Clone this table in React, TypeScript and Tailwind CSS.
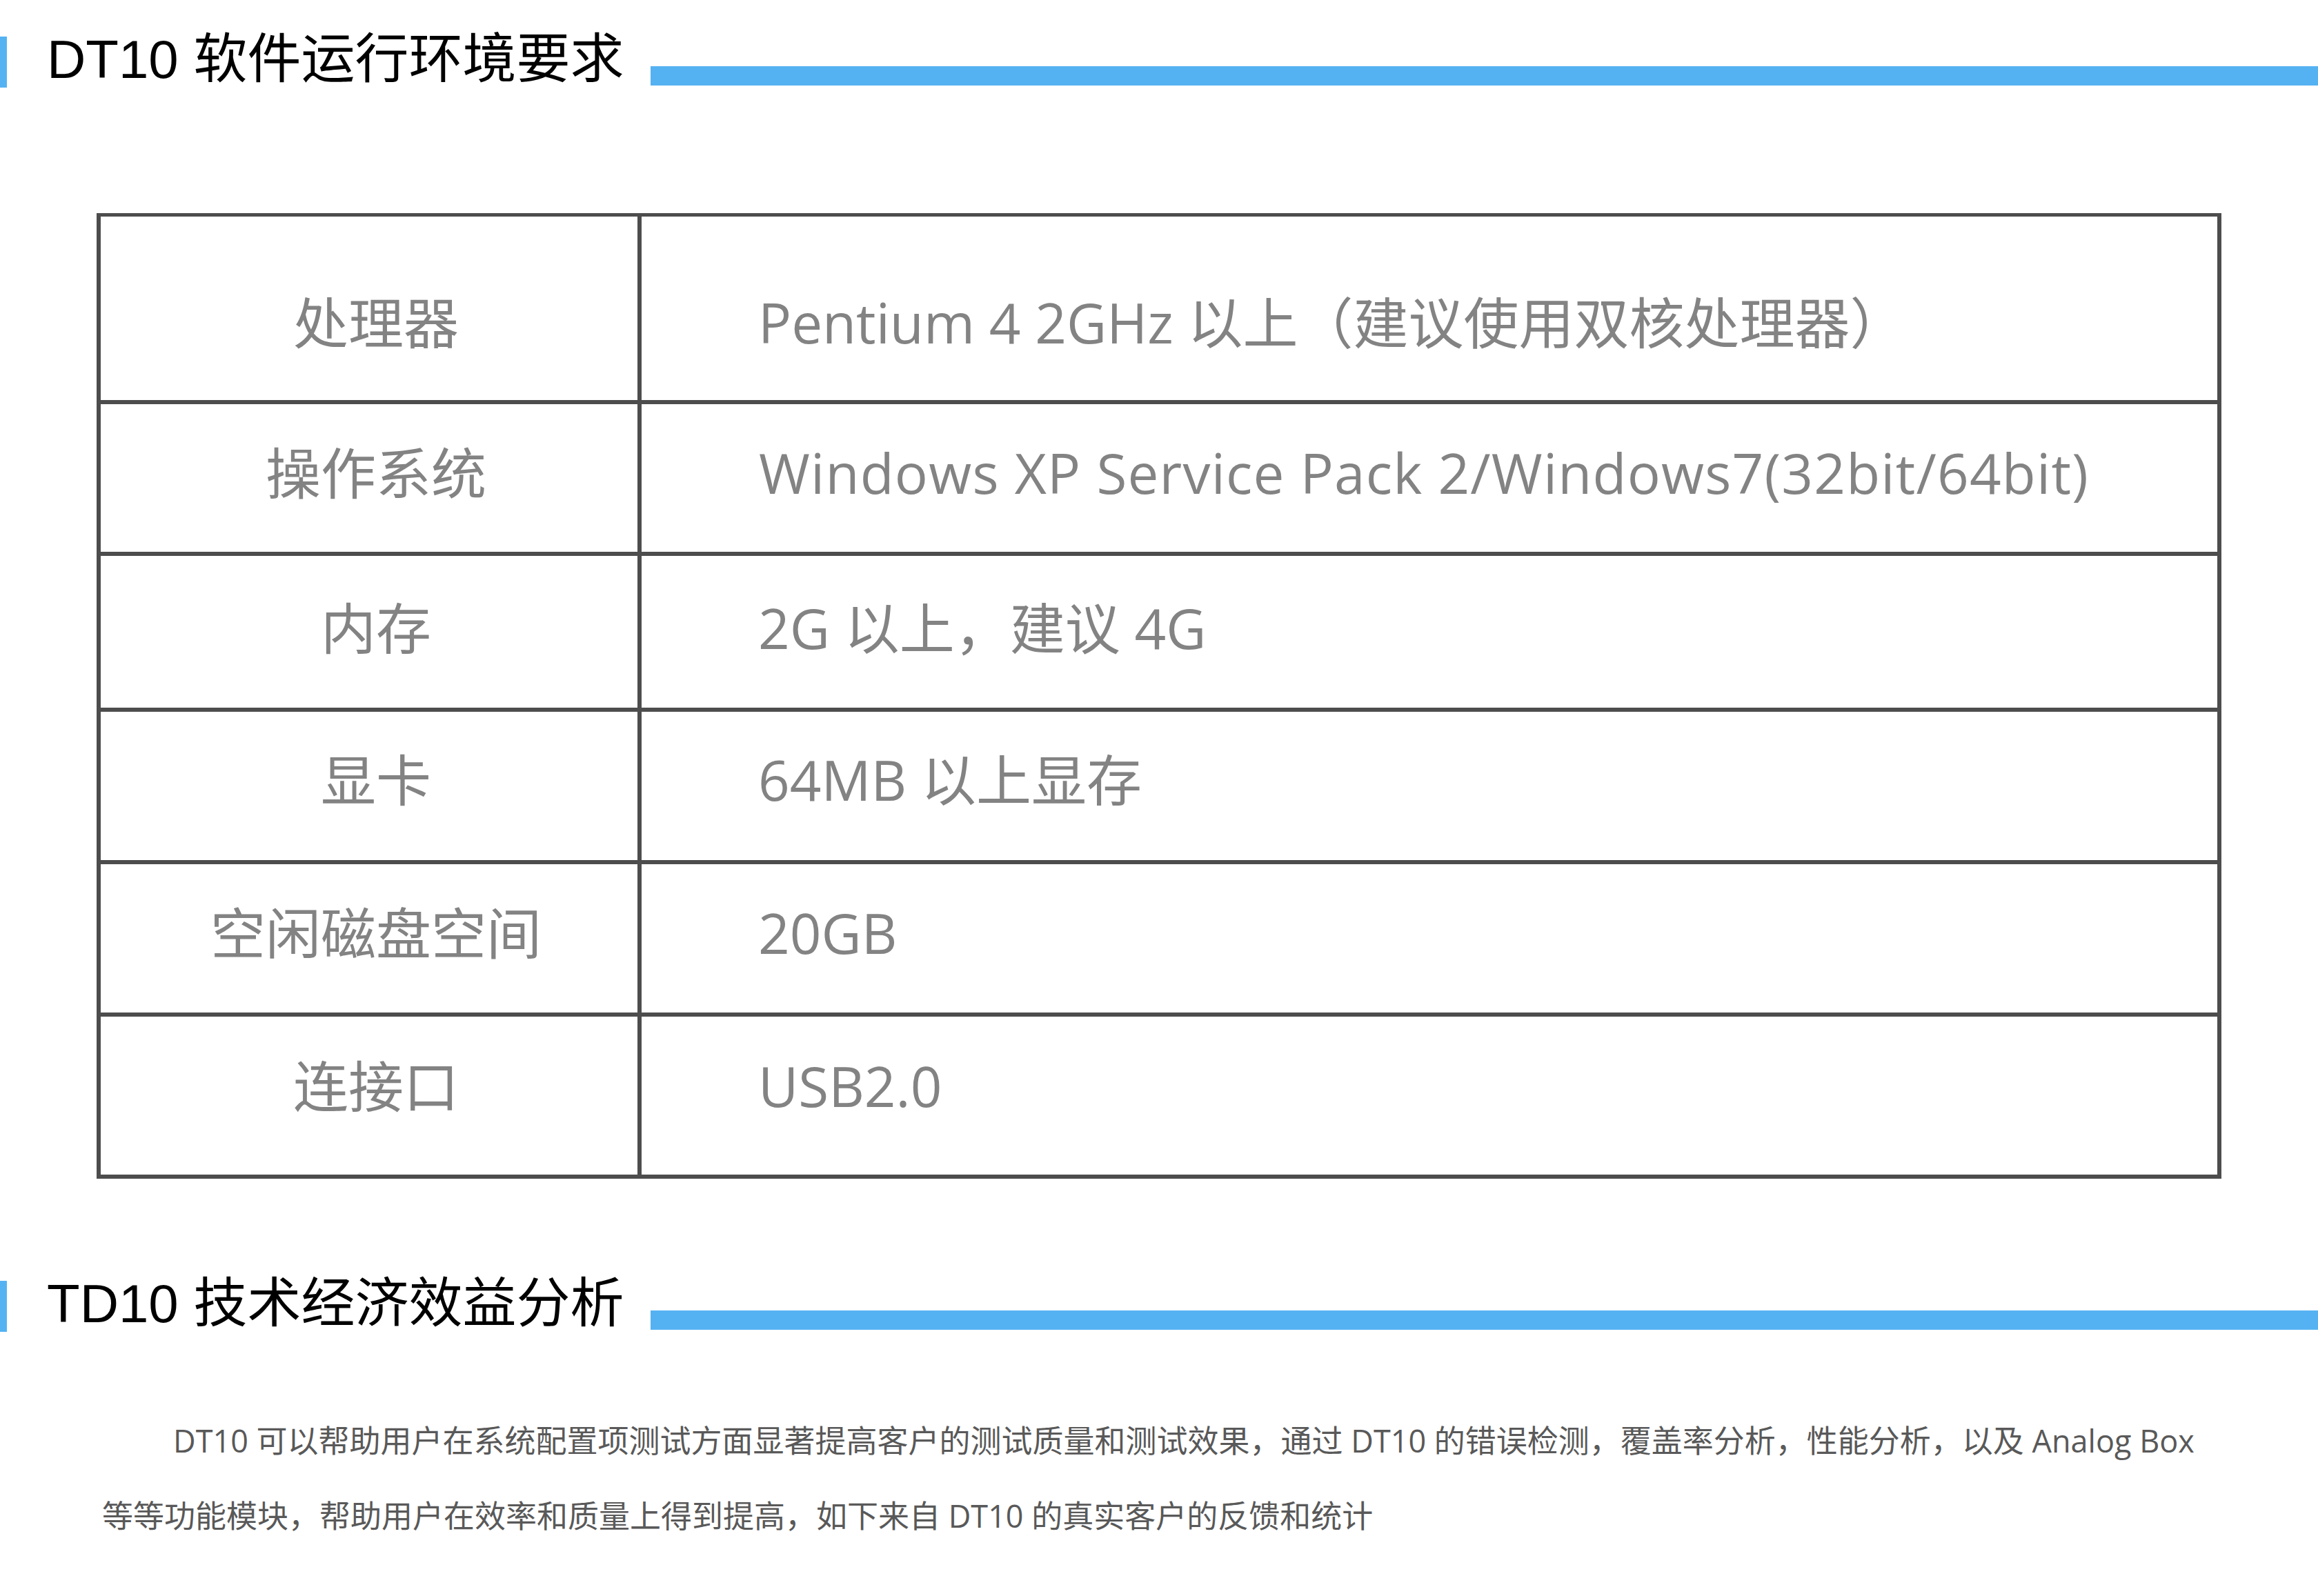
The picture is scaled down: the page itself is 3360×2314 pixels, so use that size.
import React from "react";

const BLUE = "bg-[#55b2f2]";

function Heading({ text, barH }: { text: string; barH: string }) {
  return (
    <div className="flex items-start">
      <div className={`w-[10px] ${barH} ${BLUE} shrink-0`} />
      <div
        className="ml-[58px] w-[875px] shrink-0 -mt-[6px] text-[78px] leading-[78px] text-black whitespace-nowrap"
        style={{ fontFamily: '"Liberation Sans", "Noto Sans CJK SC", sans-serif' }}
      >
        {text}
      </div>
      <div className={`flex-1 h-[28px] mt-[43px] ${BLUE}`} />
    </div>
  );
}

const rows: { label: string; value: string; h: string; pt: string; first?: boolean; track?: string }[] = [
  { label: "处理器", value: "Pentium 4 2GHz 以上（建议使用双核处理器）", h: "h-[266px]", pt: "pt-[113px]", first: true },
  { label: "操作系统", value: "Windows XP Service Pack 2/Windows7(32bit/64bit)", h: "h-[220px]", pt: "pt-[59px]", track: "tracking-[1.2px] pl-[170px]" },
  { label: "内存", value: "2G 以上，建议 4G", h: "h-[226px]", pt: "pt-[64px]" },
  { label: "显卡", value: "64MB 以上显存", h: "h-[221px]", pt: "pt-[58px]" },
  { label: "空闲磁盘空间", value: "20GB", h: "h-[221px]", pt: "pt-[59px]" },
  { label: "连接口", value: "USB2.0", h: "h-[235px]", pt: "pt-[60px]" },
];

export default function App() {
  return (
    <div className="w-[3360px] h-[2314px] bg-white overflow-hidden">
      <div className="pt-[53px]">
        <Heading text="DT10 软件运行环境要求" barH="h-[74px]" />
      </div>

      <div
        className="mt-[182px] ml-[140px] w-[3080px] border-t-[5px] border-b-[6px] border-x-[6px] border-[#4d4d4d] text-[80px] leading-[80px] text-[#838383]"
        style={{ fontFamily: '"Open Sans", "Noto Sans CJK SC", sans-serif' }}
      >
        {rows.map((r, i) => (
          <div
            key={i}
            className={`flex ${r.h} ${r.first ? "" : "border-t-[6px] border-[#4d4d4d]"}`}
          >
            <div className={`w-[784px] shrink-0 border-r-[6px] border-[#4d4d4d] pl-[20px] text-center whitespace-nowrap ${r.pt}`}>
              {r.label}
            </div>
            <div className={`flex-1 whitespace-nowrap ${r.pt} ${r.track ?? "pl-[169px]"}`}>{r.value}</div>
          </div>
        ))}
      </div>

      <div className="mt-[148px]">
        <Heading text="TD10 技术经济效益分析" barH="h-[74px]" />
      </div>

      <p
        className="mt-[103px] pl-[148px] text-[45px] leading-[109px] indent-[103px] text-[#595959] whitespace-nowrap"
        style={{ fontFamily: '"Open Sans", "Noto Sans CJK SC", sans-serif' }}
      >
        DT10 可以帮助用户在系统配置项测试方面显著提高客户的测试质量和测试效果，通过 DT10 的错误检测，覆盖率分析，性能分析，以及 Analog Box
        <br />
        等等功能模块，帮助用户在效率和质量上得到提高，如下来自 DT10 的真实客户的反馈和统计
      </p>
    </div>
  );
}
